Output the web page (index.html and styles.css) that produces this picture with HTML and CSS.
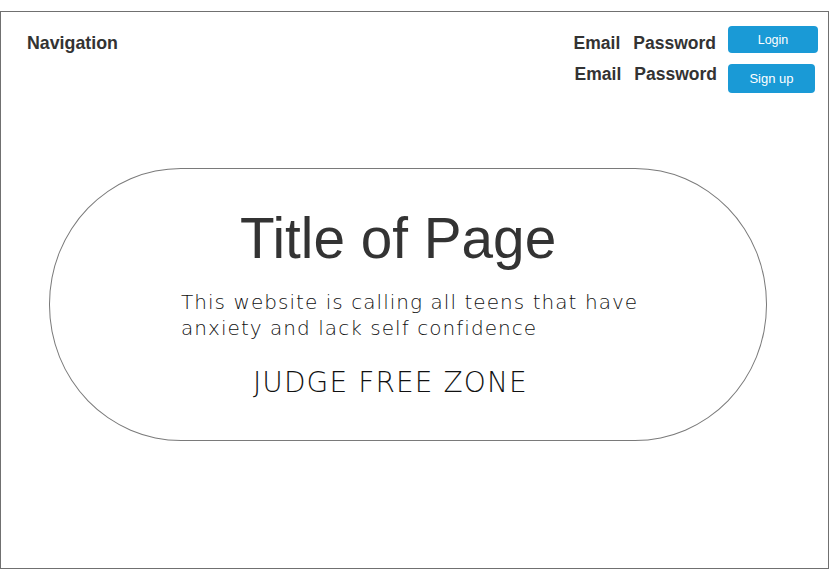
FILE: index.html
```html
<!DOCTYPE html>
<html lang="en">
<head>
<meta charset="utf-8">
<title>Title of Page</title>
<link rel="stylesheet" href="styles.css">
</head>
<body>
<div class="frame">
  <header class="header">
    <div class="nav">Navigation</div>
    <div class="auth">
      <div class="labels labels-top"><span>Email</span><span>Password</span></div>
      <button class="btn btn-login">Login</button>
      <div class="labels labels-bottom"><span>Email</span><span>Password</span></div>
      <button class="btn btn-signup">Sign up</button>
    </div>
  </header>
  <main class="pill">
    <h1 class="title">Title of Page</h1>
    <p class="desc">This website is calling all teens that have<br>anxiety and lack self confidence</p>
    <p class="zone">JUDGE FREE ZONE</p>
  </main>
</div>
</body>
</html>
```
FILE: styles.css
```css
html, body {
  margin: 0;
  padding: 0;
  background: #fff;
}
body {
  font-family: "Liberation Sans", Arial, sans-serif;
  color: #333;
}
.frame {
  box-sizing: border-box;
  margin-top: 11px;
  width: 829px;
  height: 558px;
  border: 1px solid #707070;
  display: flex;
  flex-direction: column;
}
.header {
  display: flex;
  justify-content: space-between;
  align-items: flex-start;
  padding: 14px 10px 0 26px;
}
.nav {
  font-weight: bold;
  font-size: 17.8px;
  line-height: 20px;
  margin-top: 7px;
}
.auth {
  display: grid;
  grid-template-columns: auto auto;
  column-gap: 11px;
  row-gap: 11px;
}
.labels {
  display: flex;
  gap: 13px;
  font-weight: bold;
  font-size: 17.5px;
  line-height: 20px;
  justify-self: end;
}
.labels-top { align-self: end; margin-right: 1px; }
.labels-bottom { align-self: start; }
.btn {
  font-family: "Liberation Sans", Arial, sans-serif;
  border: none;
  background: #1a9ad6;
  color: #fff;
  font-size: 13px;
  border-radius: 4px;
  padding: 0;
  justify-self: start;
}
.btn-login {
  width: 90px;
  height: 27px;
  font-size: 12.5px;
}
.btn-signup {
  width: 87px;
  height: 29px;
}
.pill {
  box-sizing: border-box;
  margin: 75px 0 0 48px;
  width: 718px;
  height: 273px;
  border: 1px solid #7a7a7a;
  border-radius: 132px / 136px;
  padding-top: 38px;
}
.title {
  margin: 0 0 0 190px;
  font-weight: normal;
  font-size: 56.7px;
  line-height: 64px;
  color: #333;
}
.desc {
  margin: 18px 0 0 131px;
  font-family: "DejaVu Sans", sans-serif;
  font-weight: 200;
  font-size: 20px;
  letter-spacing: 1.05px;
  line-height: 26px;
  color: #111;
}
.zone {
  margin: 26px 0 0 203px;
  font-family: "DejaVu Sans", sans-serif;
  font-weight: 200;
  font-size: 28px;
  letter-spacing: 1.1px;
  line-height: 32px;
  color: #111;
}
```
